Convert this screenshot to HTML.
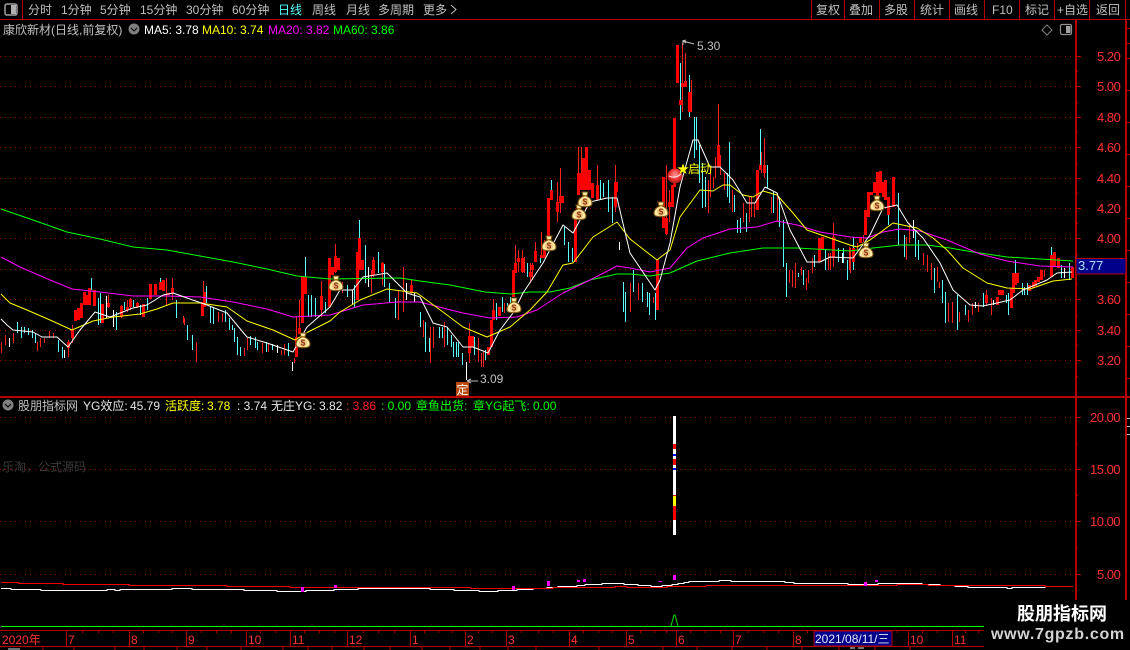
<!DOCTYPE html>
<html lang="zh">
<head>
<meta charset="utf-8">
<title>股朋指标网</title>
<style>
html,body{margin:0;padding:0;background:#000;width:1130px;height:650px;overflow:hidden}
svg{display:block}
text{font-family:"Liberation Sans","WenQuanYi Zen Hei","Noto Sans CJK SC",sans-serif;font-size:12px}
.m{fill:#c0c0c0}
.a{fill:#ff3232;font-size:13px;letter-spacing:-.5px}
.d{fill:#ff3232}
</style>
</head>
<body>
<svg width="1130" height="650" viewBox="0 0 1130 650" xmlns="http://www.w3.org/2000/svg">
<rect width="1130" height="650" fill="#000"/>

<!-- dotted grid -->
<g stroke="#990000" stroke-width="1" stroke-dasharray="1 4" fill="none" shape-rendering="crispEdges">
<path d="M0 56.5H1075M0 86.5H1075M0 117.5H1075M0 147.5H1075M0 178.5H1075M0 208.5H1075M0 238.5H1075M0 269.5H1075M0 299.5H1075M0 330.5H1075M0 360.5H1075"/>
<path d="M0 417.5H1075M0 469.5H1075M0 521.5H1075M0 574.5H1075"/>
</g>

<g transform="translate(.5 0)">
<!-- candles: cyan -->
<path fill="none" stroke="#5cffff" stroke-width="1" shape-rendering="crispEdges" d="M17 322V333M21 327V338M24 327V333M28 328V335M32 330V338M35 333V343M58 340V352M62 347V358M91 278V290M98 298V325M100 293V323M116 312V330M124 302V310M133 300V307M140 305V315M147 298V310M160 278V282M176 300V318M187 325V340M192 335V350M206 286V303M210 307V323M213 308V324M225 310V322M229 318V330M232 325V330M234 328V342M237 337V355M240 347V356M250 336V345M255 337V348M257 342V350M266 342V352M272 344V350M288 343V356M305 257V277M308 295V317M311 295V317M315 298V317M325 302V313M347 285V297M354 285V307M359 220V238M365 245V283M378 252V273M384 264V287M389 283V303M395 298V318M420 312V327M425 322V352M429 338V352M439 327V338M442 327V338M447 327V345M451 335V347M453 342V357M456 342V357M458 342V357M462 353V365M474 337V355M485 350V360M496 303V320M502 297V312M507 303V312M510 297V310M527 263V277M540 256V263M551 180V190M564 227V245M568 242V262M572 248V262M600 180V200M603 183V197M608 180V212M612 197V223M623 282V312M625 292V322M633 270V292M642 283V302M647 292V307M649 293V315M655 293V320M680 63V120M689 75V117M694 117V158M696 117V150M699 145V183M702 163V208M705 177V207M727 173V197M729 142V203M734 195V212M737 220V233M740 218V233M746 213V232M760 129V165M767 165V188M773 192V213M779 197V227M783 220V267M786 263V297M798 273V277M803 270V285M814 255V267M825 250V270M838 248V262M843 248V263M847 260V280M853 237V270M874 183V193M888 200V225M898 193V245M904 235V257M915 230V257M918 240V260M934 268V293M942 280V303M945 292V323M957 295V330M965 305V315M983 293V307M1006 295V303M1008 293V315M1015 260V273M1022 283V295M1024 287V295M1027 283V295M1051 247V255M1061 265V278M1069 263V280"/>

<!-- candles: white dojis -->
<path fill="none" stroke="#fff" stroke-width="1" shape-rendering="crispEdges" d="M9 338V347M64 350V358M106 296V318M113 310V327M277 345V353M292 362V371M352 290V305M368 267V287M406 283V300M414 293V302M466 362V380M619 242V250M842 253V263M913 220V238M975 302V308M993 300V305M1064 268V278"/>

<!-- candles: red wicks -->
<path fill="none" stroke="#ff2020" stroke-width="1" shape-rendering="crispEdges" d="M1 342V353M5 335V345M13 333V343M37 342V351M40 338V347M44 338V343M49 331V338M53 333V338M68 340V357M72 325V343M108 295V308M121 305V318M127 300V312M130 298V310M137 302V308M166 278V305M172 278V300M183 316V323M184 318V325M196 342V362M203 281V305M218 312V322M222 313V322M244 348V356M247 338V350M262 343V353M268 343V352M281 350V355M284 344V355M294 358V363M296 316V357M299 300V334M321 281V317M335 244V273M342 282V293M371 270V293M373 257V277M382 262V285M398 290V320M403 267V312M411 280V295M423 320V337M430 327V363M433 327V348M444 322V347M469 323V363M478 338V362M481 353V367M483 352V367M493 299V320M504 303V313M515 245V273M518 250V272M522 250V273M524 257V273M530 263V283M532 263V280M535 242V262M541 232V258M544 240V258M557 182V222M560 168V213M578 147V195M581 147V190M597 165V200M615 165V212M630 283V312M638 283V300M653 297V303M666 165V235M669 190V222M682 43V112M685 53V83M691 80V112M708 180V213M710 167V197M713 177V188M715 157V178M718 104V167M720 155V175M724 173V190M732 190V212M743 203V222M749 197V222M751 197V217M754 203V217M761 152V173M764 138V178M771 197V213M777 193V222M789 270V283M792 270V287M795 263V288M801 267V275M806 278V290M808 270V283M812 258V273M828 253V270M830 253V270M833 223V267M849 247V270M850 248V273M857 243V250M863 235V242M906 237V260M909 223V243M923 253V265M927 255V272M931 263V280M937 267V282M939 282V288M948 303V322M952 302V323M959 312V322M968 310V322M972 303V315M978 303V312M986 290V305M991 298V315M1044 270V277"/>

<!-- candles: red bodies -->
<path fill="none" stroke="#ff0000" stroke-width="3" shape-rendering="crispEdges" d="M68 342V348M72 330V338M75 310V321M78 308V320M81 303V318M84 292V305M86 295V305M89 288V305M94 290V306M102 304V323M108 303V307M121 306V317M127 307V310M130 299V307M137 303V307M143 304V317M150 284V299M155 284V295M160 282V290M163 280V291M168 293V295M172 288V293M202 302V316M204 292V307M296 337V357M299 328V334M302 277V323M305 277V294M321 296V310M329 258V307M332 267V275M335 256V272M338 258V270M357 252V300M359 238V270M362 260V270M373 260V275M382 263V272M411 285V293M469 336V353M472 336V347M488 347V355M491 320V347M493 310V320M499 307V316M513 270V297M515 263V273M518 258V262M522 258V272M530 272V277M532 265V270M535 251V262M541 255V258M544 250V258M548 198V237M551 190V200M557 202V212M560 196V203M562 196V203M575 218V262M578 173V195M581 173V190M583 158V190M586 147V190M589 170V190M592 183V198M597 185V200M615 182V207M616 182V192M657 260V310M663 177V228M666 218V234M669 202V207M672 185V207M674 118V187M677 45V83M680 100V105M682 83V87M685 81V87M689 92V112M718 145V167M757 170V210M760 165V170M764 165V173M819 238V262M822 237V250M833 237V258M853 248V262M860 237V243M865 210V235M868 192V217M871 192V195M874 182V193M877 172V197M880 171V193M883 182V197M885 180V200M888 197V215M893 177V207M986 295V303M997 297V305M999 290V295M1002 290V295M1011 288V308M1013 273V293M1015 273V285M1017 273V283M1029 285V291M1033 282V288M1035 280V286M1038 277V282M1041 270V280M1051 255V277M1054 252V267M1058 258V268M1072 267V278"/>
</g>

<!-- moving averages -->
<g fill="none" stroke-width="1" stroke-linejoin="round">
<polyline stroke="#00ff00" points="1,209 33,220 67,232 100,239 133,247 167,250 200,256 233,262 267,269 297,276 330,279 400,278 420,281 450,285 485,292 510,294 530,292 550,292 570,288 590,280 617,274 630,274 650,276 670,273 697,261 730,253 763,248 797,248 850,251 873,248 900,245 927,245 950,248 973,252 1007,257 1040,259 1073,261"/>
<polyline stroke="#ff00ff" points="1,257 20,267 50,280 72,289 100,292 133,296 167,296 200,297 233,302 267,309 293,317 330,315 363,305 397,302 420,302 443,308 463,313 490,318 517,317 537,310 563,293 590,280 617,266 630,268 650,272 670,268 687,248 703,238 730,229 757,227 777,221 797,225 820,232 850,237 867,238 883,232 900,229 920,231 947,240 980,254 1007,261 1040,266 1073,267"/>
<polyline stroke="#ffff00" points="1,294 10,303 27,310 50,320 72,330 93,321 113,317 140,314 157,309 173,303 200,303 227,307 247,321 273,330 295,340 308,332 330,321 340,312 360,300 387,289 417,293 443,312 463,327 487,337 510,327 530,310 547,292 563,265 573,263 593,237 617,222 630,239 657,260 670,250 680,217 700,190 713,191 723,185 730,185 743,195 753,197 763,191 777,195 793,213 807,230 827,237 850,245 857,247 870,240 893,223 917,228 933,238 947,250 963,268 987,283 1007,288 1030,289 1053,281 1072,279"/>
<polyline stroke="#ffffff" points="1,319 7,325 13,330 33,332 42,337 57,337 68,347 80,330 95,312 110,317 133,308 147,305 163,295 173,293 187,298 207,305 227,313 247,337 267,343 293,352 307,327 330,307 340,290 353,290 363,277 387,273 407,293 420,297 433,323 447,327 463,347 473,347 488,353 500,330 513,313 523,293 543,263 563,225 573,233 590,202 607,198 617,198 630,253 655,290 660,280 670,243 680,187 693,140 698,140 710,167 720,167 733,180 747,203 755,203 765,187 777,193 790,230 807,262 820,262 830,257 853,258 870,235 883,208 897,205 908,223 923,238 940,263 953,290 970,305 983,306 997,303 1010,300 1023,290 1047,280 1057,273 1072,272"/>
</g>

<!-- money bags -->
<defs>
<g id="bag">
<path d="M-3-8H3L1.8-3.6C6.2-2 7.6 2 6.8 4.6 5.8 7.4-5.8 7.4-6.8 4.6-7.6 2-6.2-2-1.8-3.6Z" fill="#ffeeaa" stroke="#7a5410" stroke-width="1.1"/>
<path d="M-2.2-4.2H2.2" stroke="#a06a10" stroke-width="1.4"/>
<circle cx="0" cy="2" r="4" fill="#ecc47a"/>
</g>
</defs>
<use href="#bag" x="303" y="341"/><use href="#bag" x="336" y="284"/><use href="#bag" x="514" y="306"/><use href="#bag" x="549" y="244"/><use href="#bag" x="579" y="213"/><use href="#bag" x="585" y="200"/><use href="#bag" x="661" y="210"/><use href="#bag" x="866" y="251"/><use href="#bag" x="877" y="204"/>
<g text-anchor="middle">
<text x="303" y="345.5" fill="#8c3010" style="font-size:8px;font-weight:bold">$</text><text x="336" y="288.5" fill="#8c3010" style="font-size:8px;font-weight:bold">$</text><text x="514" y="310.5" fill="#8c3010" style="font-size:8px;font-weight:bold">$</text><text x="549" y="248.5" fill="#8c3010" style="font-size:8px;font-weight:bold">$</text><text x="579" y="217.5" fill="#8c3010" style="font-size:8px;font-weight:bold">$</text><text x="585" y="204.5" fill="#8c3010" style="font-size:8px;font-weight:bold">$</text><text x="661" y="214.5" fill="#8c3010" style="font-size:8px;font-weight:bold">$</text><text x="866" y="255.5" fill="#8c3010" style="font-size:8px;font-weight:bold">$</text><text x="877" y="208.5" fill="#8c3010" style="font-size:8px;font-weight:bold">$</text>
</g>

<!-- start ball and star -->
<defs>
<radialGradient id="ball" cx="50%" cy="40%" r="65%"><stop offset="0" stop-color="#ff9a9a"/><stop offset="0.55" stop-color="#ee3030"/><stop offset="1" stop-color="#8a1010"/></radialGradient>
</defs>
<circle cx="675" cy="176" r="7.5" fill="url(#ball)"/>
<path d="M669 176Q675 179 681 174" stroke="#ffd8d8" stroke-width="1.2" fill="none"/>
<text x="677" y="173" style="font-size:12px" fill="#ffff00">★</text>
<text x="688" y="173" fill="#ffff00" style="font-size:12px">启动</text>

<!-- high/low labels -->
<path d="M683 40V45M683 41L694 44M683 41l3-1M683 41l3 2" stroke="#c0c0c0" fill="none"/>
<text x="697" y="50" class="m">5.30</text>
<path d="M467 381H478M467 381l4-2M467 381l4 2" stroke="#c0c0c0" fill="none"/>
<text x="480" y="383" class="m">3.09</text>
<rect x="456" y="382" width="13" height="14" fill="#b8480c"/>
<text x="456.5" y="394" fill="#fff" style="font-size:12px">定</text>

<!-- indicator pane -->
<rect x="673" y="416" width="3" height="119" fill="#fff"/>
<rect x="673" y="444" width="3" height="5" fill="#f00"/>
<rect x="673" y="454" width="3" height="2" fill="#00f"/>
<rect x="673" y="459" width="3" height="6" fill="#f00"/>
<rect x="673" y="468" width="3" height="2" fill="#00f"/>
<rect x="673" y="495" width="3" height="1" fill="#c00"/>
<rect x="673" y="496" width="3" height="10" fill="#ff0"/>
<rect x="673" y="506" width="3" height="14" fill="#f00"/>

<g fill="none" stroke-width="1.2" shape-rendering="crispEdges">
<path stroke="#fff" d="M1 588.5H11V589.5H41V590.5H107V589.5H115V590.5H120V589.5H172V588.5H192V589.5H244V590.5H277V591.5H306V590.5H334V589.5H358V588.5H430V589.5H454V590.5H479V591.5H498V590.5H517V589.5H533V588.5H547V587.5H558V586.5H577V585.5H585V584.5H602V583.5H624V584.5H638V585.5H651V586.5H662V585.5H672V584.5H678V583.5H684V582.5H689V581.5H719V580.5H731V581.5H785V582.5H794V583.5H848V584.5H867V585.5H867V584.5H878V583.5H922V584.5H940V585.5H955V586.5H968V587.5H1007V588.5H1012V587.5H1045V586.5H1073"/>
<path stroke="#f00000" d="M1 582.5H19V583.5H63V584.5H129V585.5H227V586.5H290V587.5H471V588.5H553V587.5H615V586.5H627V587.5H667V586.5H706V585.5H897V584.5H928V585.5H1045V586.5H1073"/>
</g>
<g fill="#ff00ff" shape-rendering="crispEdges">
<rect x="301" y="587" width="3" height="5"/><rect x="334" y="585" width="3" height="3"/><rect x="512" y="586" width="3" height="4"/><rect x="547" y="581" width="3" height="5"/><rect x="577" y="580" width="3" height="2"/><rect x="583" y="579" width="3" height="3"/><rect x="673" y="575" width="3" height="5"/><rect x="659" y="581" width="3" height="1"/><rect x="864" y="582" width="3" height="4"/><rect x="875" y="580" width="3" height="2"/>
</g>
<path d="M671 626L674 615H675L678 626" stroke="#00e000" fill="none"/>
<rect x="1" y="626" width="983" height="1" fill="#00ff00" shape-rendering="crispEdges"/>

<!-- frame lines -->
<g fill="#b40000" shape-rendering="crispEdges">
<rect x="0" y="19" width="1130" height="1"/>
<rect x="0" y="396" width="1130" height="2"/>
<rect x="0" y="630" width="984" height="1"/>
<rect x="0" y="646" width="984" height="1"/>
<rect x="1075" y="19" width="2" height="581"/>
<rect x="1125" y="19" width="2" height="581"/>
<rect x="22" y="0" width="1" height="19"/>
<rect x="811" y="0" width="1" height="19"/><rect x="844" y="0" width="1" height="19"/><rect x="879" y="0" width="1" height="19"/><rect x="914" y="0" width="1" height="19"/><rect x="949" y="0" width="1" height="19"/><rect x="984" y="0" width="1" height="19"/><rect x="1019" y="0" width="1" height="19"/><rect x="1054" y="0" width="1" height="19"/><rect x="1089" y="0" width="1" height="19"/><rect x="1125" y="0" width="1" height="19"/>
</g>

<!-- axis ticks -->
<path stroke="#b40000" fill="none" shape-rendering="crispEdges" d="M1075 56.5h6M1075 71.5h3M1075 86.5h6M1075 102.5h3M1075 117.5h6M1075 132.5h3M1075 147.5h6M1075 163.5h3M1075 178.5h6M1075 193.5h3M1075 208.5h6M1075 223.5h3M1075 238.5h6M1075 254.5h3M1075 269.5h6M1075 284.5h3M1075 299.5h6M1075 315.5h3M1075 330.5h6M1075 345.5h3M1075 360.5h6M1075 376.5h3M1075 417.5h6M1075 443.5h3M1075 469.5h6M1075 495.5h3M1075 521.5h6M1075 547.5h3M1075 574.5h6M1127 28.5h3M1127 43.5h3M1127 58.5h3M1127 90.5h3M1127 122.5h3M1127 154.5h3M1127 186.5h3M1127 218.5h3M1127 250.5h3M1127 282.5h3M1127 314.5h3M1127 346.5h3M1127 378.5h3"/>
<path stroke="#c0c0c0" fill="none" shape-rendering="crispEdges" d="M1127 418.5h3M1127 426.5h3M1127 434.5h3"/>

<!-- price labels -->
<text x="1097" y="61" class="a">5.20</text><text x="1097" y="91" class="a">5.00</text><text x="1097" y="122" class="a">4.80</text><text x="1097" y="152" class="a">4.60</text><text x="1097" y="183" class="a">4.40</text><text x="1097" y="213" class="a">4.20</text><text x="1097" y="243" class="a">4.00</text><text x="1097" y="304" class="a">3.60</text><text x="1097" y="335" class="a">3.40</text><text x="1097" y="365" class="a">3.20</text>
<rect x="1076" y="258.5" width="50" height="15.5" fill="#00008b" stroke="#b40000" shape-rendering="crispEdges"/>
<text x="1078" y="270" fill="#a8e0ff" style="font-size:13px">3.77</text>
<text x="1090" y="422" class="a">20.00</text><text x="1090" y="474" class="a">15.00</text><text x="1090" y="526" class="a">10.00</text><text x="1097" y="579" class="a">5.00</text>

<!-- top bar -->
<rect x="5" y="4" width="12" height="11" rx="2" fill="none" stroke="#a0a0a0" stroke-width="1.5"/>
<rect x="11" y="5" width="5" height="9" fill="#b0b0b0"/>
<text x="28" y="14" class="m">分时</text><text x="61" y="14" class="m">1分钟</text><text x="100" y="14" class="m">5分钟</text><text x="140" y="14" class="m">15分钟</text><text x="186" y="14" class="m">30分钟</text><text x="232" y="14" class="m">60分钟</text><text x="278" y="14" fill="#54ffff">日线</text><text x="312" y="14" class="m">周线</text><text x="346" y="14" class="m">月线</text><text x="378" y="14" class="m">多周期</text><text x="423" y="14" class="m">更多</text>
<path d="M451 5l5 4.5-5 4.5" stroke="#c0c0c0" fill="none"/>
<text x="816" y="14" class="m">复权</text><text x="849" y="14" class="m">叠加</text><text x="884" y="14" class="m">多股</text><text x="920" y="14" class="m">统计</text><text x="954" y="14" class="m">画线</text><text x="992" y="14" class="m">F10</text><text x="1025" y="14" class="m">标记</text><text x="1057" y="14" class="m">+自选</text><text x="1096" y="14" class="m">返回</text>

<!-- info row -->
<text x="3" y="34" class="m">康欣新材(日线,前复权)</text>
<circle cx="134" cy="29" r="5.5" fill="#808080"/>
<path d="M131 28l3 3 3-3" stroke="#000" fill="none"/>
<text x="144" y="34" fill="#fff">MA5: 3.78</text>
<text x="202" y="34" fill="#ff0">MA10: 3.74</text>
<text x="268" y="34" fill="#f0f">MA20: 3.82</text>
<text x="333" y="34" fill="#0f0">MA60: 3.86</text>
<path d="M1047 25l5 5-5 5-5-5Z" fill="none" stroke="#808080"/>
<rect x="1060.5" y="24.5" width="11" height="10" rx="1.5" fill="none" stroke="#909090" stroke-width="1.2"/>
<rect x="1066" y="26" width="4.5" height="7" fill="#a0a0a0"/>

<!-- indicator header -->
<circle cx="8" cy="405" r="5.5" fill="#808080"/>
<path d="M5 404l3 3 3-3" stroke="#000" fill="none"/>
<text x="18" y="410" class="m">股朋指标网</text>
<text x="83" y="410" fill="#e8e8e8">YG效应: </text><text x="130" y="410" fill="#e8e8e8">45.79</text>
<text x="165" y="410" fill="#ff0">活跃度: </text><text x="207" y="410" fill="#ff0">3.78</text>
<text x="237" y="410" fill="#e8e8e8">: 3.74</text>
<text x="271" y="410" fill="#e8e8e8">无庄YG: 3.82</text>
<text x="346" y="410" fill="#ff2020">: 3.86</text>
<text x="381" y="410" fill="#0f0">: 0.00</text>
<text x="416" y="410" fill="#0f0">章鱼出货:</text>
<text x="473" y="410" fill="#0f0">章YG起飞: 0.00</text>
<text x="2" y="471" fill="#3a3a3a">乐淘，公式源码</text>

<!-- date row -->
<path stroke="#b40000" fill="none" shape-rendering="crispEdges" d="M66.5 631V646M129.5 631V646M186.5 631V646M246.5 631V646M290.5 631V646M347.5 631V646M410.5 631V646M465.5 631V646M506.5 631V646M569.5 631V646M626.5 631V646M676.5 631V646M733.5 631V646M793.5 631V646M908.5 631V646M952.5 631V646"/>
<path stroke="#b40000" fill="none" shape-rendering="crispEdges" d="M82.5 631v2M98.5 631v2M113.5 631v2M143.5 631v2M158.5 631v2M172.5 631v2M201.5 631v2M216.5 631v2M231.5 631v2M260.5 631v2M275.5 631v2M304.5 631v2M319.5 631v2M334.5 631v2M363.5 631v2M378.5 631v2M394.5 631v2M424.5 631v2M438.5 631v2M452.5 631v2M478.5 631v2M492.5 631v2M521.5 631v2M538.5 631v2M553.5 631v2M583.5 631v2M598.5 631v2M612.5 631v2M640.5 631v2M654.5 631v2M666.5 631v2M690.5 631v2M705.5 631v2M720.5 631v2M748.5 631v2M763.5 631v2M778.5 631v2M807.5 631v2M897.5 631v2M922.5 631v2M937.5 631v2M965.5 631v2M978.5 631v2"/>
<path stroke="#b40000" fill="none" shape-rendering="crispEdges" d="M43 647V650M74 647V650M115 647V650M144 647V650M177 647V650M207 647V650M241 647V650M283 647V650M308 647V650M332 647V650M364 647V650M390 647V650M422 647V650M450 647V650M480 647V650M508 647V650M536 647V650M599 647V650M663 647V650M697 647V650M732 647V650M767 647V650M802 647V650M839 647V650M875 647V650M910 647V650"/>
<text x="2" y="644" class="d">2020年</text><text x="68" y="644" class="d">7</text><text x="131" y="644" class="d">8</text><text x="188" y="644" class="d">9</text><text x="248" y="644" class="d">10</text><text x="292" y="644" class="d">11</text><text x="349" y="644" class="d">12</text><text x="412" y="644" class="d">1</text><text x="467" y="644" class="d">2</text><text x="508" y="644" class="d">3</text><text x="571" y="644" class="d">4</text><text x="628" y="644" class="d">5</text><text x="678" y="644" class="d">6</text><text x="735" y="644" class="d">7</text><text x="795" y="644" class="d">8</text><text x="910" y="644" class="d">10</text><text x="954" y="644" class="d">11</text>
<rect x="814" y="631" width="78" height="15" fill="#00008b" stroke="#b40000" shape-rendering="crispEdges"/>
<text x="815" y="643" fill="#e8e8ff">2021/08/11/三</text>
<path d="M8 649h12M850 648h5M858 648h6" stroke="#d0e8e8"/>

<!-- watermark -->
<rect x="985" y="600" width="145" height="50" fill="#000"/>
<text x="1017" y="620" fill="#fff" style="font-size:18px;font-weight:bold">股朋指标网</text>
<text x="991" y="639" fill="#d4d4d4" style="font-size:16px;font-weight:bold;letter-spacing:.7px">www.7gpzb.com</text>
</svg>
</body>
</html>
